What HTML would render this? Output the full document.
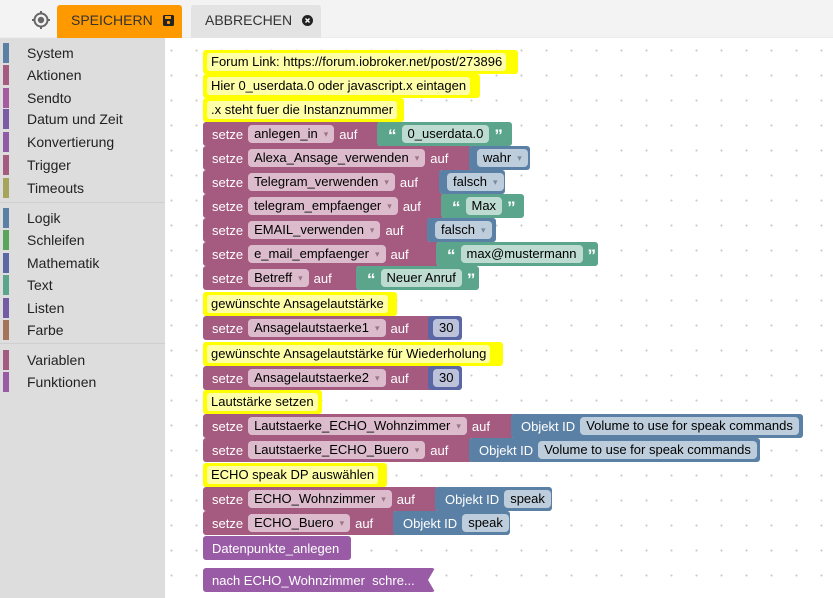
<!DOCTYPE html>
<html><head><meta charset="utf-8"><style>
*{margin:0;padding:0;box-sizing:border-box}
body{width:833px;height:598px;overflow:hidden;background:#fff;font-family:"Liberation Sans",sans-serif;font-size:13px;position:relative}
#top{position:absolute;left:0;top:0;width:833px;height:38px;background:#f3f3f3;border-bottom:1px solid #ececec}
#side{position:absolute;left:0;top:38px;width:165px;height:560px;background:#dddddd}
#ws{position:absolute;left:165px;top:38px;width:668px;height:560px;background-color:#fff;background-image:radial-gradient(circle,#c8c8c8 0.9px,transparent 1.2px);background-size:25px 25px;background-position:-6px 0px}
.it{position:absolute;left:0;height:20px;line-height:20px;font-size:14px;color:#222}
.it i{position:absolute;left:3px;top:0;width:6px;height:20px}
.it span{position:absolute;left:27px;white-space:nowrap}
.sep{position:absolute;left:0;width:165px;height:1px;background:#cfcfcf}
.b{position:absolute;height:24px;display:flex;align-items:center;color:#fff;white-space:nowrap;padding-left:9px;border-radius:3px}
.v{background:#a55b80}
.g{background:#5ba58c}
.l{background:#5b80a5}
.n{background:#5b67a5}
.p{background:#995ba5}
.c{background:#ffff00;color:#000;padding-left:4px}
.c span{background:#ffffa8;border-radius:3px;padding:1px 4px;height:18px;line-height:16px}
.f{height:18px;line-height:18px;border-radius:4px;padding:0 6px;color:#000;display:inline-flex;align-items:center}
.v .f{background:#dcbccc}
.g .f{background:#bddbd1}
.l .f{background:#bdcddb}
.n .f{background:#bdc2db}
.dd:after{content:"▾";font-size:9px;color:#9a7585;margin-left:6px}
.l .dd:after{color:#7a8aa0}
.m{margin-left:5px;margin-right:5px}
.q{font-weight:bold;font-size:17px;margin:0 5px;line-height:24px;padding-top:3px}
</style></head><body>
<div id="top">
<svg style="position:absolute;left:31px;top:10px" width="20" height="20" viewBox="0 0 20 20"><circle cx="10" cy="10" r="6.5" fill="none" stroke="#666" stroke-width="2"/><circle cx="10" cy="10" r="3.2" fill="#666"/><path d="M10 1v3M10 16v3M1 10h3M16 10h3" stroke="#666" stroke-width="2"/></svg>
<div style="position:absolute;left:57px;top:5px;width:125px;height:33px;background:#ff9900;border-radius:3px 3px 0 0;color:#333;font-size:14px;line-height:31px;padding-left:14px">SPEICHERN <svg width="11" height="11" viewBox="0 0 11 11" style="margin-left:6px;vertical-align:-1px"><rect x="0" y="0" width="11" height="11" rx="1.5" fill="#222"/><rect x="2" y="1" width="6" height="3" fill="#ff9900"/><circle cx="5.5" cy="7.5" r="1.6" fill="#ff9900"/></svg></div>
<div style="position:absolute;left:191px;top:5px;width:130px;height:33px;background:#e3e3e3;border-radius:3px 3px 0 0;color:#333;font-size:14px;line-height:31px;padding-left:14px">ABBRECHEN <svg width="11" height="11" viewBox="0 0 11 11" style="margin-left:6px;vertical-align:-1px"><circle cx="5.5" cy="5.5" r="5.5" fill="#222"/><path d="M3.5 3.5l4 4M7.5 3.5l-4 4" stroke="#fff" stroke-width="1.4"/></svg></div>
</div>
<div id="side">
<div class="it" style="top:5px"><i style="background:#5b80a5"></i><span>System</span></div>
<div class="it" style="top:27px"><i style="background:#a55b80"></i><span>Aktionen</span></div>
<div class="it" style="top:50px"><i style="background:#a55ba0"></i><span>Sendto</span></div>
<div class="it" style="top:71px"><i style="background:#7b5ba5"></i><span>Datum und Zeit</span></div>
<div class="it" style="top:94px"><i style="background:#905ba5"></i><span>Konvertierung</span></div>
<div class="it" style="top:117px"><i style="background:#a55b80"></i><span>Trigger</span></div>
<div class="it" style="top:140px"><i style="background:#a5a55b"></i><span>Timeouts</span></div>
<div class="sep" style="top:164px"></div>
<div class="it" style="top:170px"><i style="background:#5b80a5"></i><span>Logik</span></div>
<div class="it" style="top:192px"><i style="background:#5ba55b"></i><span>Schleifen</span></div>
<div class="it" style="top:215px"><i style="background:#5b67a5"></i><span>Mathematik</span></div>
<div class="it" style="top:237px"><i style="background:#5ba58c"></i><span>Text</span></div>
<div class="it" style="top:260px"><i style="background:#745ba5"></i><span>Listen</span></div>
<div class="it" style="top:282px"><i style="background:#a5745b"></i><span>Farbe</span></div>
<div class="sep" style="top:305px"></div>
<div class="it" style="top:312px"><i style="background:#a55b80"></i><span>Variablen</span></div>
<div class="it" style="top:334px"><i style="background:#995ba5"></i><span>Funktionen</span></div>
</div>
<div id="ws"></div>

<div class="b c" style="left:203px;top:50px;width:315px"><span>Forum Link: https://forum.iobroker.net/post/273896</span></div>
<div class="b c" style="left:203px;top:74px;width:277px"><span>Hier 0_userdata.0 oder javascript.x eintagen</span></div>
<div class="b c" style="left:203px;top:98px;width:201px"><span>.x steht fuer die Instanznummer</span></div>

<div class="b v" style="left:203px;top:122px;width:178px">setze<span class="f dd m">anlegen_in</span>auf</div>
<div class="b g" style="left:377px;top:122px;width:135px;padding-left:6px"><span class="q">“</span><span class="f">0_userdata.0</span><span class="q">”</span></div>

<div class="b v" style="left:203px;top:146px;width:270px">setze<span class="f dd m">Alexa_Ansage_verwenden</span>auf</div>
<div class="b l" style="left:469px;top:146px;width:61px;padding-left:8px"><span class="f dd">wahr</span></div>

<div class="b v" style="left:203px;top:170px;width:240px">setze<span class="f dd m">Telegram_verwenden</span>auf</div>
<div class="b l" style="left:439px;top:170px;width:66px;padding-left:8px"><span class="f dd">falsch</span></div>

<div class="b v" style="left:203px;top:194px;width:242px">setze<span class="f dd m">telegram_empfaenger</span>auf</div>
<div class="b g" style="left:441px;top:194px;width:83px;padding-left:6px"><span class="q">“</span><span class="f">Max</span><span class="q">”</span></div>

<div class="b v" style="left:203px;top:218px;width:228px">setze<span class="f dd m">EMAIL_verwenden</span>auf</div>
<div class="b l" style="left:427px;top:218px;width:69px;padding-left:8px"><span class="f dd">falsch</span></div>

<div class="b v" style="left:203px;top:242px;width:237px">setze<span class="f dd m">e_mail_empfaenger</span>auf</div>
<div class="b g" style="left:436px;top:242px;width:162px;padding-left:6px"><span class="q">“</span><span class="f">max@mustermann</span><span class="q">”</span></div>

<div class="b v" style="left:203px;top:266px;width:157px">setze<span class="f dd m">Betreff</span>auf</div>
<div class="b g" style="left:356px;top:266px;width:123px;padding-left:6px"><span class="q">“</span><span class="f">Neuer Anruf</span><span class="q">”</span></div>

<div class="b c" style="left:203px;top:292px;width:194px"><span>gewünschte Ansagelautstärke</span></div>
<div class="b v" style="left:203px;top:316px;width:229px">setze<span class="f dd m">Ansagelautstaerke1</span>auf</div>
<div class="b n" style="left:428px;top:316px;width:34px;padding-left:5px"><span class="f">30</span></div>

<div class="b c" style="left:203px;top:342px;width:300px"><span>gewünschte Ansagelautstärke für Wiederholung</span></div>
<div class="b v" style="left:203px;top:366px;width:229px">setze<span class="f dd m">Ansagelautstaerke2</span>auf</div>
<div class="b n" style="left:428px;top:366px;width:34px;padding-left:5px"><span class="f">30</span></div>

<div class="b c" style="left:203px;top:390px;width:119px"><span>Lautstärke setzen</span></div>
<div class="b v" style="left:203px;top:414px;width:312px">setze<span class="f dd m">Lautstaerke_ECHO_Wohnzimmer</span>auf</div>
<div class="b l" style="left:511px;top:414px;width:292px;padding-left:10px">Objekt ID<span class="f" style="margin-left:5px">Volume to use for speak commands</span></div>
<div class="b v" style="left:203px;top:438px;width:270px">setze<span class="f dd m">Lautstaerke_ECHO_Buero</span>auf</div>
<div class="b l" style="left:469px;top:438px;width:291px;padding-left:10px">Objekt ID<span class="f" style="margin-left:5px">Volume to use for speak commands</span></div>

<div class="b c" style="left:203px;top:463px;width:184px"><span>ECHO speak DP auswählen</span></div>
<div class="b v" style="left:203px;top:487px;width:236px">setze<span class="f dd m">ECHO_Wohnzimmer</span>auf</div>
<div class="b l" style="left:435px;top:487px;width:117px;padding-left:10px">Objekt ID<span class="f" style="margin-left:5px">speak</span></div>
<div class="b v" style="left:203px;top:511px;width:194px">setze<span class="f dd m">ECHO_Buero</span>auf</div>
<div class="b l" style="left:393px;top:511px;width:117px;padding-left:10px">Objekt ID<span class="f" style="margin-left:5px">speak</span></div>

<div class="b p" style="left:203px;top:536px;width:148px">Datenpunkte_anlegen</div>
<div class="b p" style="left:203px;top:568px;width:232px;clip-path:polygon(0 0,100% 0,97% 50%,100% 100%,0 100%)">nach ECHO_Wohnzimmer&nbsp; schre...</div>
</body></html>
